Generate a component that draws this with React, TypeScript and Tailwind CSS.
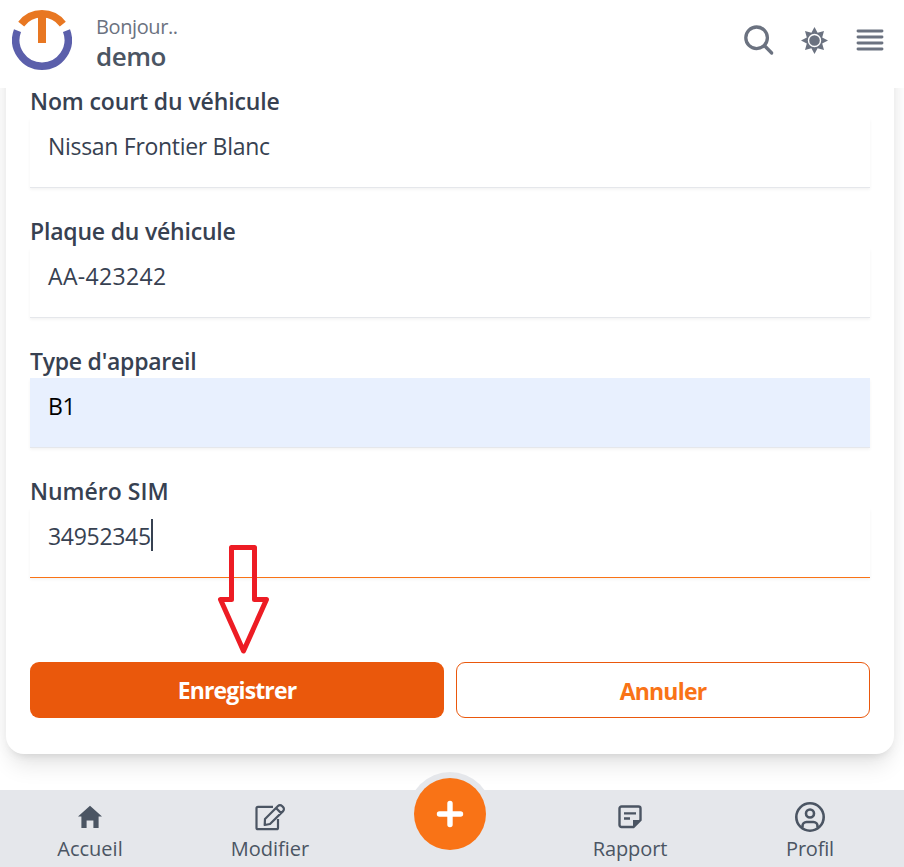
import type { ReactNode } from "react";

function Field({ label, labelTracking, children, tone }: { label: string; labelTracking: string; children: ReactNode; tone: string }) {
  return (
    <div className="h-[130px]">
      <div className={`h-[30px] whitespace-nowrap text-[23px] leading-[26px] font-semibold text-[#374151] ${labelTracking}`}>{label}</div>
      <div className={`flex h-[70px] items-start border-b px-[18px] pt-[12px] text-[23px] leading-8 whitespace-nowrap shadow-[0_1.5px_3px_rgba(0,0,0,0.05)] ${tone}`}>
        {children}
      </div>
    </div>
  );
}

function NavItem({ icon, label, tracking }: { icon: ReactNode; label: string; tracking: string }) {
  return (
    <div className="flex w-[180px] flex-col items-center pt-[9px] text-[#4b5563]">
      <div className="flex h-9 items-center">{icon}</div>
      <span className={`text-[20px] leading-[28px] ${tracking}`}>{label}</span>
    </div>
  );
}

function Logo() {
  return (
    <svg width="60" height="60" viewBox="0 0 60 60" fill="none">
      <path d="M9.200 14.100A26.200 26.200 0 0 1 50.800 14.100" stroke="#e87722" strokeWidth="7.500" />
      <path d="M30 6v27" stroke="#e87722" strokeWidth="8" />
      <path d="M5.500 20.700A26.200 26.200 0 1 0 54.500 20.700" stroke="#5b5fab" strokeWidth="7.500" />
    </svg>
  );
}

export default function App() {
  return (
    <div className="flex h-[867px] w-[904px] flex-col overflow-hidden bg-white font-['Open_Sans','Noto_Sans',sans-serif]">
      <header className="relative z-10 flex h-[88px] shrink-0 items-start bg-white pl-3 pt-[10px]">
        <Logo />
        <div className="ml-6 flex w-[630px] flex-col pt-[2px]">
          <span className="h-[29px] text-[20px] leading-[30px] tracking-[-0.4px] text-[#6b7280]">Bonjour..</span>
          <span className="text-[26px] leading-[30px] font-semibold tracking-[-0.45px] text-[#4b5563]">demo</span>
        </div>
        <div className="flex h-[60px] items-center text-[#6b7280]">
          <svg className="ml-[17px] shrink-0" width="32" height="32" viewBox="0 0 32 32" fill="none" stroke="currentColor" strokeLinecap="round">
            <circle cx="13.600" cy="13.800" r="10.800" strokeWidth="3.300" />
            <path d="m21.800 22 6.900 7" strokeWidth="3.300" />
          </svg>
          <svg className="ml-[25px] shrink-0" width="28" height="28" viewBox="0 0 28 28" fill="currentColor">
            <path d="m14.500 1 3.100 5.800 6.400-1.800-1.800 6.400L28 14.500l-5.800 3.100 1.800 6.400-6.400-1.800-3.100 5.800-3.100-5.800L5 24l1.800-6.400L1 14.500l5.800-3.100L5 5l6.400 1.800Z" />
            <circle cx="14.500" cy="14.500" r="6" fill="none" stroke="white" strokeWidth="1.400" />
          </svg>
          <svg className="ml-7 shrink-0" width="28" height="24" viewBox="0 0 28 24" stroke="currentColor" strokeWidth="2.900" strokeLinecap="round">
            <path d="M2 3h24M2 9h24M2 15h24M2 21h24" />
          </svg>
        </div>
      </header>

      <main className="-mt-10 mr-[10px] ml-[6px] flex h-[706px] shrink-0 flex-col rounded-b-[18px] bg-white px-6 pt-10 shadow-[0_15px_22px_-4px_rgba(0,0,0,0.1),0_6px_9px_-6px_rgba(0,0,0,0.1),0_0_16px_rgba(0,0,0,0.05)]">
        <Field label="Nom court du véhicule" labelTracking="tracking-[-0.12px]" tone="border-[#e5e7eb] text-[#374151]">
          <span className="tracking-[-0.3px]">Nissan Frontier Blanc</span>
        </Field>
        <Field label="Plaque du véhicule" labelTracking="tracking-[-0.2px]" tone="border-[#e5e7eb] text-[#374151]">
          <span className="tracking-[0.35px]">AA-423242</span>
        </Field>
        <Field label="Type d'appareil" labelTracking="tracking-[-0.25px]" tone="border-[#e5e7eb] bg-[#e8f0fe] text-black">
          <span className="tracking-[-0.4px]">B1</span>
        </Field>
        <Field label="Numéro SIM" labelTracking="tracking-[0px]" tone="border-[#f97316] text-[#374151]">
          <span className="tracking-[-0.3px]">34952345</span>
          <span className="-mt-px h-8 w-[2px] bg-[#374151]" />
        </Field>
        <div className="mt-[54px] flex gap-3">
          <button className="h-14 w-[414px] rounded-[9px] bg-[#ea580c] text-[23px] font-bold tracking-[-0.85px] text-white">Enregistrer</button>
          <button className="h-14 w-[414px] rounded-[9px] border border-[#ea580c] pt-[2px] text-[23px] font-bold tracking-[-0.8px] text-[#f97316]">Annuler</button>
        </div>
      </main>

      <nav className="relative mt-9 flex h-[77px] shrink-0 bg-[#e5e7eb]">
        <NavItem label="Accueil" tracking="tracking-[0px]" icon={
          <svg width="24" height="24" viewBox="0 0 24 24" fill="currentColor"><path d="M12 .8 0 11.500h3.400V23h5.200v-7.500h6.800V23h5.200V11.500H24Z" /></svg>
        } />
        <NavItem label="Modifier" tracking="tracking-[0px]" icon={
          <svg width="32" height="32" viewBox="0 0 32 32" fill="none" stroke="currentColor" strokeWidth="2.200" strokeLinejoin="round">
            <path d="M19 5.800H4a1.500 1.500 0 0 0-1.500 1.500v19.400a1.500 1.500 0 0 0 1.500 1.500h18.500a1.500 1.500 0 0 0 1.500-1.500V18" />
            <path d="m11 18 13-13a2.800 2.800 0 0 1 4 0l1.100 1.100a2.800 2.800 0 0 1 0 4L16 23l-5.300 1ZM22 7l5.100 5.100" />
          </svg>
        } />
        <div className="w-[180px]" />
        <NavItem label="Rapport" tracking="tracking-[-0.1px]" icon={
          <svg width="24" height="24" viewBox="0 0 24 24">
            <path d="M3.500 1.500h17a2 2 0 0 1 2 2V15l-7 7h-12a2 2 0 0 1-2-2V3.500a2 2 0 0 1 2-2Z" fill="none" stroke="currentColor" strokeWidth="2.400" />
            <path d="M6 8.300h12M6 13.500h6" stroke="currentColor" strokeWidth="2.300" />
            <path d="M15 23v-8h8Z" fill="currentColor" />
          </svg>
        } />
        <NavItem label="Profil" tracking="tracking-[-0.2px]" icon={
          <svg width="32" height="32" viewBox="0 0 32 32" fill="none" stroke="currentColor" strokeWidth="2.600">
            <circle cx="16" cy="16" r="13.700" /><circle cx="16" cy="12.500" r="4" />
            <path d="M8.500 26.500v-1.500a4 4 0 0 1 4-4h7a4 4 0 0 1 4 4v1.500" />
          </svg>
        } />
        <div className="absolute left-[408px] top-[-18px] flex size-[84px] items-center justify-center rounded-full bg-[#e5e7eb]">
          <div className="flex size-[72px] items-center justify-center rounded-full bg-[#f97316]">
            <svg width="28" height="28" viewBox="0 0 28 28" stroke="white" strokeWidth="5.400" strokeLinecap="round"><path d="M3.500 14h21M14 3.500v21" /></svg>
          </div>
        </div>
      </nav>

      <svg className="absolute left-[216px] top-[542px] z-20" width="56" height="116" viewBox="0 0 56 116" fill="none" stroke="#ed1c24" strokeWidth="5" strokeLinejoin="round">
        <path d="M15.500 5.500h23v52H50.500L27.500 109 4.500 57.500h11Z" />
      </svg>
    </div>
  );
}
